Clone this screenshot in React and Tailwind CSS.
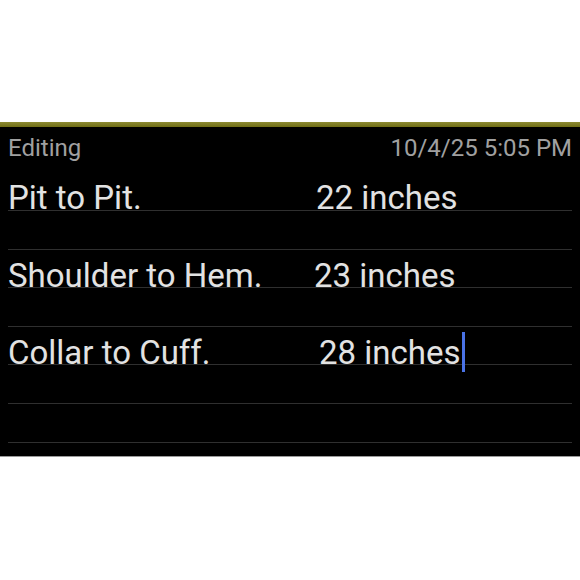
import React from "react";

const rows = [
  { h: "h-[39px]", label: "Pit to Pit.", value: "22 inches", pad: "pl-[8px]" },
  { h: "h-[39px]" },
  { h: "h-[38px]", label: "Shoulder to Hem.", value: "23 inches", pad: "pl-[6px]" },
  { h: "h-[39px]" },
  { h: "h-[38px]", label: "Collar to Cuff.", value: "28 inches", pad: "pl-[11px]", cursor: true },
  { h: "h-[39px]" },
  { h: "h-[39px]" },
];

export default function App() {
  return (
    <div className="w-[580px] h-[580px] bg-white flex flex-col font-['Roboto',sans-serif]">
      <div className="h-[122px] shrink-0" />
      {/* olive title rule */}
      <div className="h-[5px] shrink-0 bg-gradient-to-b from-[#8c8a32] to-[#6f6d14]" />

      <div className="bg-black border-b border-[#9a9a9a] shrink-0">
        {/* Header */}
        <div className="h-[45px] flex justify-between items-start px-2 pt-[7px] text-[24px] leading-[28px] text-[#a0a0a0]">
          <span>Editing</span>
          <span>10/4/25 5:05 PM</span>
        </div>

        {/* Ruled lines */}
        <div className="px-2">
          {rows.map((row, idx) => (
            <div key={idx} className={`${row.h} border-b border-[#2f2f2f]`}>
              {row.label && (
                <div className="flex pt-[9px] text-[33px] leading-[33px] text-[#e2e2e2] whitespace-nowrap">
                  <span className="w-[300px] shrink-0">{row.label}</span>
                  <span className={`${row.pad} flex items-start`}>
                    {row.value}
                    {row.cursor && (
                      <span className="inline-block w-[3px] h-[40px] bg-[#4a72e6] -mt-[4px] ml-[1px]" />
                    )}
                  </span>
                </div>
              )}
            </div>
          ))}
          <div className="h-[13px]" />
        </div>
      </div>
    </div>
  );
}
